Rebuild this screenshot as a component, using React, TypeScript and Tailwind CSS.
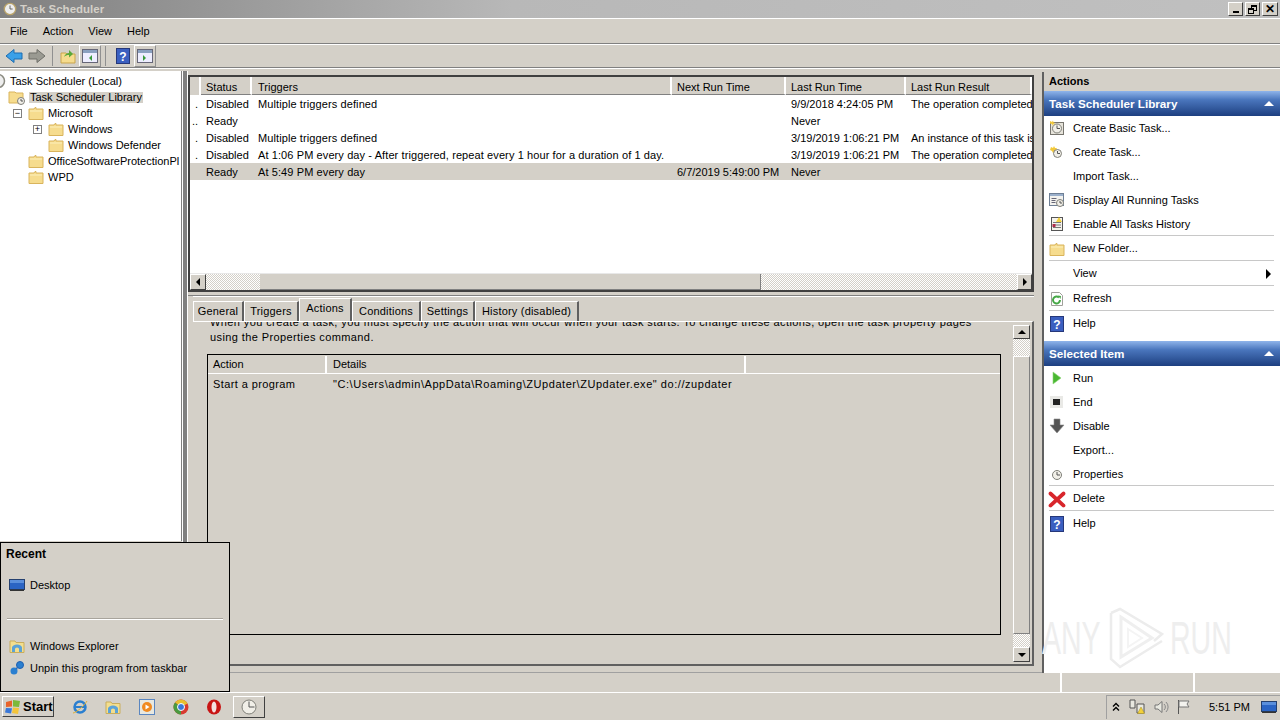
import type { ReactNode } from "react";

const FONT = "font-['Liberation_Sans',Arial,sans-serif]";
const DITHER =
  "bg-[repeating-conic-gradient(#ffffff_0_25%,#d4d0c8_0_50%)] bg-[length:2px_2px]";
const BTN =
  "flex items-center justify-center bg-[#d4d0c8] border border-t-white border-l-white border-r-[#404040] border-b-[#404040]";

// ── Icons ─────────────────────────────────────────────────────────────────────

function Folder({ className = "" }: { className?: string }) {
  return (
    <svg viewBox="0 0 16 16" className={`w-4 h-4 shrink-0 ${className}`}>
      <path d="M1 4h5l1-1.500h1l0 1.500h7v10.500H1z" fill="#f6dc8e" stroke="#d9b45c" strokeWidth="1" />
      <path d="M2 5.500h12v1H2z" fill="#fdf0bd" />
    </svg>
  );
}

function Clock({ x = 8, y = 8, r = 5 }: { x?: number; y?: number; r?: number }) {
  return (
    <g>
      <circle cx={x} cy={y} r={r} fill="#f1efe8" stroke="#7f7f78" />
      <path d={`M${x} ${y - r + 1.500}V${y}H${x + r - 1.500}`} stroke="#555" fill="none" />
    </g>
  );
}

function HelpIcon() {
  return (
    <svg viewBox="0 0 16 16" className="w-4 h-4">
      <rect x="1.500" y="0.500" width="13" height="15" fill="#3b5fc0" stroke="#26387a" />
      <text x="8" y="12.500" textAnchor="middle" fontSize="12" fontWeight="700" fill="#fff" fontFamily="Liberation Sans">?</text>
    </svg>
  );
}

const ICONS: Record<string, ReactNode> = {
  basic: (
    <svg viewBox="0 0 16 16" className="w-4 h-4">
      <rect x="1.500" y="2.500" width="13" height="12" fill="#e6e3da" stroke="#77756e" />
      <Clock x={8} y={8.500} r={4.500} />
      <path d="M1 1l2 1 1-1.500 .5 2 2 .5-2 1-.5 2-1-2-2-.5z" fill="#f3c93a" />
    </svg>
  ),
  create: (
    <svg viewBox="0 0 16 16" className="w-4 h-4">
      <path d="M2 3l2 1 1-2 1 2 2 0-1 2 1 2-2 0-2 1-1-2-2-1z" fill="#f3c93a" />
      <Clock x={8.500} y={9.500} r={4} />
    </svg>
  ),
  running: (
    <svg viewBox="0 0 16 16" className="w-4 h-4">
      <rect x="0.500" y="1.500" width="14" height="12" fill="#f3f2ee" stroke="#6e7f95" />
      <path d="M1 2h13v2H1z" fill="#9bb0cb" />
      <path d="M2.500 6.500h5M2.500 8.500h4M2.500 10.500h4" stroke="#667" />
      <Clock x={11} y={11} r={3.500} />
    </svg>
  ),
  history: (
    <svg viewBox="0 0 16 16" className="w-4 h-4">
      <rect x="2.500" y="1.500" width="11" height="13" fill="#f5f3ec" stroke="#555" />
      <path d="M4 6.500h8M4 9h8M4 11.500h8" stroke="#777" />
      <path d="M10 1l3 5H7z" fill="#f3d03a" />
      <rect x="3.500" y="8" width="3" height="3" fill="#b02a4a" />
    </svg>
  ),
  folder: <Folder />,
  refresh: (
    <svg viewBox="0 0 16 16" className="w-4 h-4">
      <path d="M2.500 1.500h8l3 3v10h-11z" fill="#fff" stroke="#a0a09a" />
      <path d="M11 9a3.500 3.500 0 1 1-1-2.500" fill="none" stroke="#46a846" strokeWidth="2" />
      <path d="M9 4.500l3 .5-.5 3z" fill="#46a846" />
    </svg>
  ),
  help: <HelpIcon />,
  run: (
    <svg viewBox="0 0 16 16" className="w-4 h-4">
      <path d="M4 2l8 6-8 6z" fill="#4ab832" stroke="#8ed77a" strokeWidth=".6" />
    </svg>
  ),
  end: (
    <svg viewBox="0 0 16 16" className="w-4 h-4">
      <rect x="1" y="2" width="13" height="12" fill="#e9e9e6" />
      <rect x="4" y="5" width="7" height="6" fill="#222" />
    </svg>
  ),
  disable: (
    <svg viewBox="0 0 16 16" className="w-4 h-4">
      <path d="M5 1h6v6h4l-7 8-7-8h4z" fill="#555" stroke="#8a8a8a" strokeWidth=".6" />
    </svg>
  ),
  props: (
    <svg viewBox="0 0 16 16" className="w-4 h-4">
      <Clock x={8} y={9} r={4.500} />
    </svg>
  ),
  delete: (
    <svg viewBox="0 0 16 16" className="w-4 h-4 scale-110">
      <path d="M2 3l12 11M14 3L2 14" stroke="#d8262c" strokeWidth="3.400" strokeLinecap="round" />
    </svg>
  ),
};

function ExplorerIcon() {
  return (
    <svg viewBox="0 0 16 16" className="w-4 h-4 shrink-0">
      <path d="M1 3h5l1 1.500h8v10H1z" fill="#f3de8e" stroke="#c9ad5c" />
      <path d="M3 14V9.500a5 3 0 0 1 10 0V14h-3v-3a2 1.500 0 0 0-4 0v3z" fill="#5ba3d8" />
    </svg>
  );
}

function DesktopIcon({ className = "w-4 h-4" }: { className?: string }) {
  return (
    <svg viewBox="0 0 16 16" className={`${className} shrink-0`}>
      <rect x="0.500" y="2.500" width="15" height="10" fill="#2a64c4" stroke="#24406f" />
      <path d="M1 3h14v3H1z" fill="#5a8fdc" />
      <path d="M1 12.500h14v1.500H1z" fill="#333" />
    </svg>
  );
}

// ── Data ──────────────────────────────────────────────────────────────────────

const ROWS = [
  { mark: ".", status: "Disabled", trig: "Multiple triggers defined", next: "", last: "9/9/2018 4:24:05 PM", result: "The operation completed" },
  { mark: "..", status: "Ready", trig: "", next: "", last: "Never", result: "" },
  { mark: ".", status: "Disabled", trig: "Multiple triggers defined", next: "", last: "3/19/2019 1:06:21 PM", result: "An instance of this task is" },
  { mark: ".", status: "Disabled", trig: "At 1:06 PM every day - After triggered, repeat every 1 hour for a duration of 1 day.", next: "", last: "3/19/2019 1:06:21 PM", result: "The operation completed" },
  { mark: "", status: "Ready", trig: "At 5:49 PM every day", next: "6/7/2019 5:49:00 PM", last: "Never", result: "", selected: true },
];

const COLS = "grid grid-cols-[11px_51px_420px_114px_120px_126px]";

const ACTIONS_TOP = [
  { h: 24, icon: "basic", label: "Create Basic Task..." },
  { h: 24, icon: "create", label: "Create Task..." },
  { h: 24, label: "Import Task..." },
  { h: 24, icon: "running", label: "Display All Running Tasks" },
  { h: 24, icon: "history", label: "Enable All Tasks History", sep: true },
  { h: 25, icon: "folder", label: "New Folder...", sep: true },
  { h: 25, label: "View", arrow: true, sep: true },
  { h: 25, icon: "refresh", label: "Refresh", sep: true },
  { h: 25, icon: "help", label: "Help" },
];

const ACTIONS_SEL = [
  { h: 24, icon: "run", label: "Run" },
  { h: 24, icon: "end", label: "End" },
  { h: 24, icon: "disable", label: "Disable" },
  { h: 24, label: "Export..." },
  { h: 24, icon: "props", label: "Properties", sep: true },
  { h: 25, icon: "delete", label: "Delete", sep: true },
  { h: 25, icon: "help", label: "Help" },
];

const TABS = [
  { label: "General", w: 51 },
  { label: "Triggers", w: 55 },
  { label: "Actions", w: 53, active: true },
  { label: "Conditions", w: 69 },
  { label: "Settings", w: 54 },
  { label: "History (disabled)", w: 104 },
];

// ── Pieces ────────────────────────────────────────────────────────────────────

function TreeRow({ indent, label, icon, box, sel }: { indent: number; label: string; icon: ReactNode; box?: string; sel?: boolean }) {
  return (
    <div className="flex items-center h-4 whitespace-nowrap">
      <div className="shrink-0 flex justify-end" style={{ width: indent }}>
        {box && (
          <div className="w-[9px] h-[9px] mr-[6px] border border-[#808080] flex items-center justify-center text-[9px] leading-none bg-white">
            {box}
          </div>
        )}
      </div>
      {icon}
      <span className={`ml-[3px] px-[1px] ${sel ? "bg-[#d4d0c8]" : ""}`}>{label}</span>
    </div>
  );
}

function ActionRow({ a }: { a: { h: number; icon?: string; label: string; arrow?: boolean; sep?: boolean } }) {
  return (
    <div className="relative flex items-center pl-[5px] pr-[9px]" style={{ height: a.h }}>
      <div className="w-4 h-4 flex items-center justify-center">{a.icon ? ICONS[a.icon] : null}</div>
      <span className="ml-[8px] flex-1">{a.label}</span>
      {a.arrow && <div className="w-0 h-0 border-y-[5px] border-y-transparent border-l-[5px] border-l-black" />}
      {a.sep && <div className="absolute bottom-0 left-[5px] right-[6px] h-px bg-[#c8c8c8]" />}
    </div>
  );
}

function SectionHead({ label }: { label: string }) {
  return (
    <div className="h-[25px] flex items-center justify-between pl-[5px] pr-[6px] text-white font-bold text-[11.700px] bg-[linear-gradient(#8fb4ea,#4a76bd_35%,#1d3f80)]">
      <span>{label}</span>
      <div className="w-0 h-0 border-x-[5px] border-x-transparent border-b-[5px] border-b-white" />
    </div>
  );
}

function Arrow({ dir }: { dir: "l" | "r" | "u" | "d" }) {
  if (dir === "l") return <div className="w-0 h-0 border-y-[4px] border-y-transparent border-r-[4px] border-r-black" />;
  if (dir === "r") return <div className="w-0 h-0 border-y-[4px] border-y-transparent border-l-[4px] border-l-black" />;
  if (dir === "u") return <div className="w-0 h-0 border-x-[4px] border-x-transparent border-b-[4px] border-b-black" />;
  return <div className="w-0 h-0 border-x-[4px] border-x-transparent border-t-[4px] border-t-black" />;
}

// ── App ───────────────────────────────────────────────────────────────────────

export default function App() {
  return (
    <div className={`relative w-[1280px] h-[720px] overflow-hidden flex flex-col bg-[#d4d0c8] text-[11px] leading-none text-black ${FONT}`}>
      {/* Title bar */}
      <div className="h-[18px] shrink-0 flex items-center pl-[3px] pr-[2px] bg-[linear-gradient(90deg,#808080,#b8b8b8_40%,#c0c0c0)]">
        <svg viewBox="0 0 16 16" className="w-[14px] h-[14px]">
          <circle cx="8" cy="8" r="6.500" fill="#eee" stroke="#b9a36a" strokeWidth="1.500" />
          <path d="M8 4v4h3" stroke="#555" fill="none" />
        </svg>
        <span className="ml-[3px] pt-[1px] font-bold text-[11.500px] text-[#d4d0c8]">Task Scheduler</span>
        <div className="ml-auto flex gap-[2px]">
          <div className={`${BTN} w-[15px] h-[14px] items-end pb-[2px]`}><div className="w-[6px] h-[2px] bg-black" /></div>
          <div className={`${BTN} w-[15px] h-[14px]`}>
            <div className="relative w-[9px] h-[9px]">
              <div className="absolute right-0 top-0 w-[6px] h-[6px] border border-black border-t-2" />
              <div className="absolute left-0 bottom-0 w-[6px] h-[6px] border border-black border-t-2 bg-[#d4d0c8]" />
            </div>
          </div>
          <div className={`${BTN} w-[16px] h-[14px] font-bold text-[12px]`}>✕</div>
        </div>
      </div>

      {/* Menu bar */}
      <div className="h-[26px] shrink-0 flex items-center gap-[15px] pl-[10px] pt-[1px] border-t border-t-white border-b border-b-[#808080]">
        {["File", "Action", "View", "Help"].map((m) => <span key={m}>{m}</span>)}
      </div>

      {/* Toolbar */}
      <div className="h-[24px] shrink-0 flex items-center pl-[5px] border-t border-t-white border-b border-b-[#808080]">
        <svg viewBox="0 0 18 16" className="w-[18px] h-4">
          <path d="M1 8l8-6.500V5h8v6H9v3.500z" fill="#3aa0e8" stroke="#1d6cb0" />
        </svg>
        <svg viewBox="0 0 18 16" className="w-[18px] h-4 ml-[5px]">
          <path d="M17 8L9 1.500V5H1v6h8v3.500z" fill="#9a9a92" stroke="#6f6f69" />
        </svg>
        <div className="w-px h-5 bg-[#909090] ml-[6px]" />
        <svg viewBox="0 0 16 16" className="w-4 h-4 ml-[7px]">
          <path d="M1 5h5l1 1h8v9H1z" fill="#f6dc8e" stroke="#c9a54c" />
          <path d="M4 9c1-3 3-4 5-4V2l4 4-4 3.500V7c-2 0-3.500 .5-5 2z" fill="#5aa83a" />
        </svg>
        <div className="ml-[3px] w-[22px] h-[22px] border border-white border-r-[#909090] border-b-[#909090] flex items-center justify-center">
          <svg viewBox="0 0 16 14" className="w-4 h-[14px]"><rect x=".5" y=".5" width="15" height="13" fill="#eef" stroke="#667" /><path d="M1 1h14v3H1z" fill="#8ba1bf" /><path d="M10 6l-3 3 3 3z" fill="#3a9a3a" /></svg>
        </div>
        <div className="w-px h-5 bg-[#909090] ml-[4px]" />
        <div className="ml-[9px]"><HelpIcon /></div>
        <div className="ml-[3px] w-[22px] h-[22px] border border-white border-r-[#909090] border-b-[#909090] flex items-center justify-center">
          <svg viewBox="0 0 16 14" className="w-4 h-[14px]"><rect x=".5" y=".5" width="15" height="13" fill="#eef" stroke="#667" /><path d="M6 6l3 3-3 3z" fill="#3a9a3a" /><path d="M1 1h14v3H1z" fill="#8ba1bf" /></svg>
        </div>
      </div>

      {/* Main */}
      <div className="h-[604px] shrink-0 flex pt-[2px] border-t border-t-white">
        {/* Tree */}
        <div className="w-[182px] shrink-0 h-[470px] bg-white pt-[2px] overflow-hidden border-r border-r-[#808080]">
          <div className="flex items-center h-4 pl-[10px] relative">
            <svg viewBox="0 0 16 16" className="absolute -left-[10px] top-0 w-4 h-4">
              <circle cx="8" cy="8" r="6.500" fill="#eee" stroke="#8a8a80" strokeWidth="1.500" />
            </svg>
            Task Scheduler (Local)
          </div>
          <TreeRow indent={8} label="Task Scheduler Library" sel icon={
            <svg viewBox="0 0 18 16" className="w-[18px] h-4 shrink-0">
              <path d="M1 3h6l1 1h7v10H1z" fill="#f6dc8e" stroke="#d9b45c" />
              <Clock x={13} y={12} r={3.500} />
            </svg>
          } />
          <TreeRow indent={28} label="Microsoft" box="−" icon={<Folder />} />
          <TreeRow indent={48} label="Windows" box="+" icon={<Folder />} />
          <TreeRow indent={48} label="Windows Defender" icon={<Folder />} />
          <TreeRow indent={28} label="OfficeSoftwareProtectionPl" icon={<Folder />} />
          <TreeRow indent={28} label="WPD" icon={<Folder />} />
        </div>
        <div className="w-[6px] shrink-0 h-full bg-[#808080] border-x border-x-white" />

        {/* Middle column */}
        <div className="w-[854px] shrink-0 h-full flex flex-col">
          {/* Task list */}
          <div className="h-[217px] shrink-0 mt-[4px] w-[846px] flex flex-col border-2 border-[#404040] bg-white">
            <div className={`${COLS} h-[18px] shrink-0 bg-[#d4d0c8]`}>
              <div className="border-r-2 border-r-white" />
              {["Status", "Triggers", "Next Run Time", "Last Run Time", "Last Run Result"].map((h) => (
                <div key={h} className={`flex items-end pb-[1px] border-r-2 border-r-white border-b border-b-[#808080] overflow-hidden whitespace-nowrap ${h === "Triggers" ? "pl-[6px]" : "pl-[5px]"}`}>{h}</div>
              ))}
            </div>
            <div className="flex-1 min-h-0 overflow-hidden">
              {ROWS.map((r, i) => (
                <div key={i} className={`${COLS} h-[17px] items-center pt-[1px] whitespace-nowrap ${r.selected ? "bg-[#d4d0c8]" : ""}`}>
                  <span className="text-right pr-[3px]">{r.mark}</span>
                  <span className="pl-[5px]">{r.status}</span>
                  <span className="pl-[6px] tracking-[0.1px]">{r.trig}</span>
                  <span className="pl-[5px]">{r.next}</span>
                  <span className="pl-[5px]">{r.last}</span>
                  <span className="pl-[5px] overflow-hidden">{r.result}</span>
                </div>
              ))}
            </div>
            <div className="h-[17px] shrink-0 flex border-t border-t-[#e8e8e8]">
              <div className={`${BTN} w-[16px]`}><Arrow dir="l" /></div>
              <div className={`${DITHER} w-[54px]`} />
              <div className="w-[501px] bg-[#d4d0c8] border-b border-r border-[#808080]" />
              <div className={`${DITHER} flex-1`} />
              <div className={`${BTN} w-[15px]`}><Arrow dir="r" /></div>
            </div>
          </div>

          {/* Splitter */}
          <div className="h-[4px] w-[846px] shrink-0 border-b border-b-[#808080]" />

          {/* Detail pane */}
          <div className="w-[846px] h-[370px] shrink-0 flex flex-col pl-[5px]">
            <div className="h-[25px] shrink-0 flex items-end border-t border-t-white">
              {TABS.map((t) => (
                <div
                  key={t.label}
                  style={{ width: t.w }}
                  className={`flex items-center justify-center border-t border-l border-white border-r-2 border-r-[#606060] whitespace-nowrap tracking-[0.2px] ${t.active ? "h-[23px] pb-[3px]" : "h-[20px] pb-[1px]"}`}
                >
                  {t.label}
                </div>
              ))}
            </div>
            <div className="flex-1 min-h-0 flex border-t border-t-white border-b-2 border-b-[#606060] border-r-2 border-r-[#606060] pr-[1px]">
              <div className="flex-1 min-w-0 overflow-hidden flex flex-col">
                <div className="h-[30px] shrink-0 pl-[17px] leading-[15px] -mt-[7px] whitespace-nowrap tracking-[0.4px]">
                  <div>When you create a task, you must specify the action that will occur when your task starts.  To change these actions, open the task property pages</div>
                  <div>using the Properties command.</div>
                </div>
                <div className="mt-[9px] ml-[14px] w-[794px] h-[281px] border border-black flex flex-col">
                  <div className="h-[19px] shrink-0 flex pt-[1px] border-b border-b-white">
                    <div className="w-[119px] pl-[5px] flex items-center border-r-2 border-r-white">Action</div>
                    <div className="w-[419px] pl-[6px] flex items-center border-r-2 border-r-white">Details</div>
                  </div>
                  <div className="flex h-[20px] items-center whitespace-nowrap">
                    <div className="w-[119px] pl-[5px] tracking-[0.4px]">Start a program</div>
                    <div className="pl-[6px] tracking-[0.55px]">"C:\Users\admin\AppData\Roaming\ZUpdater\ZUpdater.exe" do://zupdater</div>
                  </div>
                </div>
              </div>
              <div className="w-[17px] mr-[1px] shrink-0 flex flex-col pt-[3px] pb-[2px]">
                <div className={`${BTN} h-[14px] shrink-0`}><Arrow dir="u" /></div>
                <div className={`${DITHER} h-[17px] shrink-0`} />
                <div className="flex-1 border-r border-b border-[#808080] border-t border-t-white border-l border-l-white" />
                <div className={`${DITHER} h-[13px] shrink-0`} />
                <div className={`${BTN} h-[15px] shrink-0`}><Arrow dir="d" /></div>
              </div>
            </div>
          </div>
        </div>

        {/* Actions pane */}
        <div className="relative flex-1 min-w-0 h-full bg-white border-l-2 border-l-[#606060] mt-[1px]">
          <div className="h-[19px] bg-[#d4d0c8] flex items-center pl-[5px] font-bold">Actions</div>
          <SectionHead label="Task Scheduler Library" />
          {ACTIONS_TOP.map((a) => <ActionRow key={a.label} a={a} />)}
          <div className="h-[5px]" />
          <SectionHead label="Selected Item" />
          {ACTIONS_SEL.map((a) => <ActionRow key={a.label} a={a} />)}

          {/* Watermark */}
          <div className="absolute -left-[2px] top-[535px] flex items-center text-[46px] font-['Liberation_Sans',sans-serif] text-[#eeeeee] leading-none select-none">
            <span className="scale-x-[.62] origin-left w-[66px] whitespace-nowrap">ANY</span>
            <svg viewBox="0 0 56 62" className="w-[56px] h-[62px] shrink-0">
              <path d="M3 6L12 2L54 27L46 34M3 6V52L12 60L54 34" fill="none" stroke="#ececec" strokeWidth="2.500" />
              <path d="M13 10V50L44 31z" fill="none" stroke="#efefef" strokeWidth="3" />
              <path d="M20 22V40L34 31z" fill="none" stroke="#f4f4f4" strokeWidth="2" />
            </svg>
            <span className="scale-x-[.62] origin-left ml-[6px] whitespace-nowrap">RUN</span>
          </div>
        </div>
      </div>

      {/* Status bar */}
      <div className="h-[20px] shrink-0 flex border-t border-t-[#a0a0a0]">
        <div className="w-[1062px] border-r-2 border-r-white" />
        <div className="w-[133px] border-r-2 border-r-white" />
      </div>

      {/* Taskbar */}
      <div className="h-[28px] shrink-0 flex items-center border-t border-t-white relative">
        <div className="ml-[2px] w-[52px] h-[21px] flex items-center pl-[2px] gap-[2px] font-bold text-[13px] border border-t-white border-l-white border-r-[#404040] border-b-[#404040]">
          <svg viewBox="0 0 16 16" className="w-4 h-4">
            <path d="M1 3l6-1.500v6L1 8z" fill="#e8632a" />
            <path d="M8 1l7 1-1 6-6-.5z" fill="#7cb93a" />
            <path d="M1 9l6 .2-1 5.300-6-1z" fill="#3a78d8" />
            <path d="M8 8.500l6 .5-1 6-6-1z" fill="#f3c43a" />
          </svg>
          <span>Start</span>
        </div>
        {/* Quick launch */}
        <svg viewBox="0 0 16 16" className="w-4 h-4 ml-[18px]">
          <circle cx="8" cy="8" r="5.500" fill="none" stroke="#2a7fd0" strokeWidth="2.500" />
          <path d="M3 8h10" stroke="#2a7fd0" strokeWidth="2" />
          <path d="M1 14C4 14 13 6 15 2" stroke="#e0b030" fill="none" />
        </svg>
        <div className="ml-[17px]"><ExplorerIcon /></div>
        <svg viewBox="0 0 16 16" className="w-4 h-4 ml-[18px]">
          <rect x=".5" y=".5" width="15" height="15" fill="#e8e8e0" stroke="#5a86c0" />
          <circle cx="8" cy="8" r="5" fill="#f08a20" />
          <path d="M6.500 5.500l4 2.500-4 2.500z" fill="#fff" />
        </svg>
        <svg viewBox="0 0 16 16" className="w-4 h-4 ml-[18px]">
          <circle cx="8" cy="8" r="7.500" fill="#d83a30" />
          <path d="M8 8L14.500 4.500A7.500 7.500 0 0 0 2 3.500z" fill="#e8c030" />
          <path d="M8 8L2 3.500A7.500 7.500 0 0 0 8 15.500z" fill="#4a9a40" />
          <circle cx="8" cy="8" r="3.500" fill="#3a78d8" stroke="#fff" />
        </svg>
        <svg viewBox="0 0 16 16" className="w-4 h-4 ml-[17px]">
          <ellipse cx="8" cy="8" rx="7" ry="7.500" fill="#c81414" />
          <ellipse cx="8" cy="8" rx="2.500" ry="5.500" fill="#f4e0e0" />
        </svg>
        <div className="ml-[11px] w-[32px] h-[22px] flex items-center justify-center border border-t-white border-l-white border-r-[#404040] border-b-[#404040]">
          <svg viewBox="0 0 16 16" className="w-4 h-4"><Clock x={8} y={8} r={7} /></svg>
        </div>

        {/* Tray */}
        <div className="ml-auto w-[174px] h-[24px] flex items-center border-l border-t border-[#a0a0a0] whitespace-nowrap">
          <svg viewBox="0 0 10 10" className="w-[10px] h-[10px] ml-[4px]">
            <path d="M2 4.500L5 1.500l3 3M2 8.500L5 5.500l3 3" fill="none" stroke="#000" strokeWidth="1.400" />
          </svg>
          <svg viewBox="0 0 16 16" className="w-4 h-4 ml-[8px]">
            <path d="M1 1h5v8H1zM8 5h7v9H8z" fill="#e8e8e0" stroke="#555" />
            <path d="M12 8l3.500 6.500h-7z" fill="#f3d03a" stroke="#a08a20" strokeWidth=".5" />
          </svg>
          <svg viewBox="0 0 16 16" className="w-4 h-4 ml-[8px]">
            <path d="M2 6h3l4-3.500v11L5 10H2z" fill="#e8e8e0" stroke="#777" />
            <path d="M11 5a4 4 0 0 1 0 6M13 3a7 7 0 0 1 0 10" stroke="#888" fill="none" />
          </svg>
          <svg viewBox="0 0 16 16" className="w-4 h-4 ml-[7px]">
            <path d="M2.500 1v14" stroke="#555" />
            <path d="M3 2h10l-2 3 2 3H3z" fill="#f3f2ee" stroke="#777" />
          </svg>
          <span className="ml-[17px]">5:51 PM</span>
          <div className="ml-[11px]"><DesktopIcon /></div>
        </div>
      </div>

      {/* Jump list */}
      <div className="absolute left-0 top-[542px] w-[230px] h-[150px] bg-[#d4d0c8] border border-black flex flex-col">
        <div className="h-[21px] pl-[5px] pt-[5px] font-bold text-[12px]">Recent</div>
        <div className="mt-[10px] h-[22px] flex items-center pl-[8px] gap-[5px]"><DesktopIcon />Desktop</div>
        <div className="mt-[22px] mx-[6px] h-[2px] bg-[#a8a49c] border-b border-b-white" />
        <div className="mt-[15px] h-[22px] flex items-center pl-[8px] gap-[5px]"><ExplorerIcon />Windows Explorer</div>
        <div className="h-[22px] flex items-center pl-[8px] gap-[5px]">
          <svg viewBox="0 0 16 16" className="w-4 h-4 shrink-0">
            <path d="M3 13L8 8" stroke="#1f5fb0" strokeWidth="2" />
            <circle cx="5" cy="11" r="3.500" fill="#2a7fd0" />
            <circle cx="11" cy="5" r="3.500" fill="#2a7fd0" stroke="#1f5fb0" />
          </svg>
          Unpin this program from taskbar
        </div>
      </div>
    </div>
  );
}
